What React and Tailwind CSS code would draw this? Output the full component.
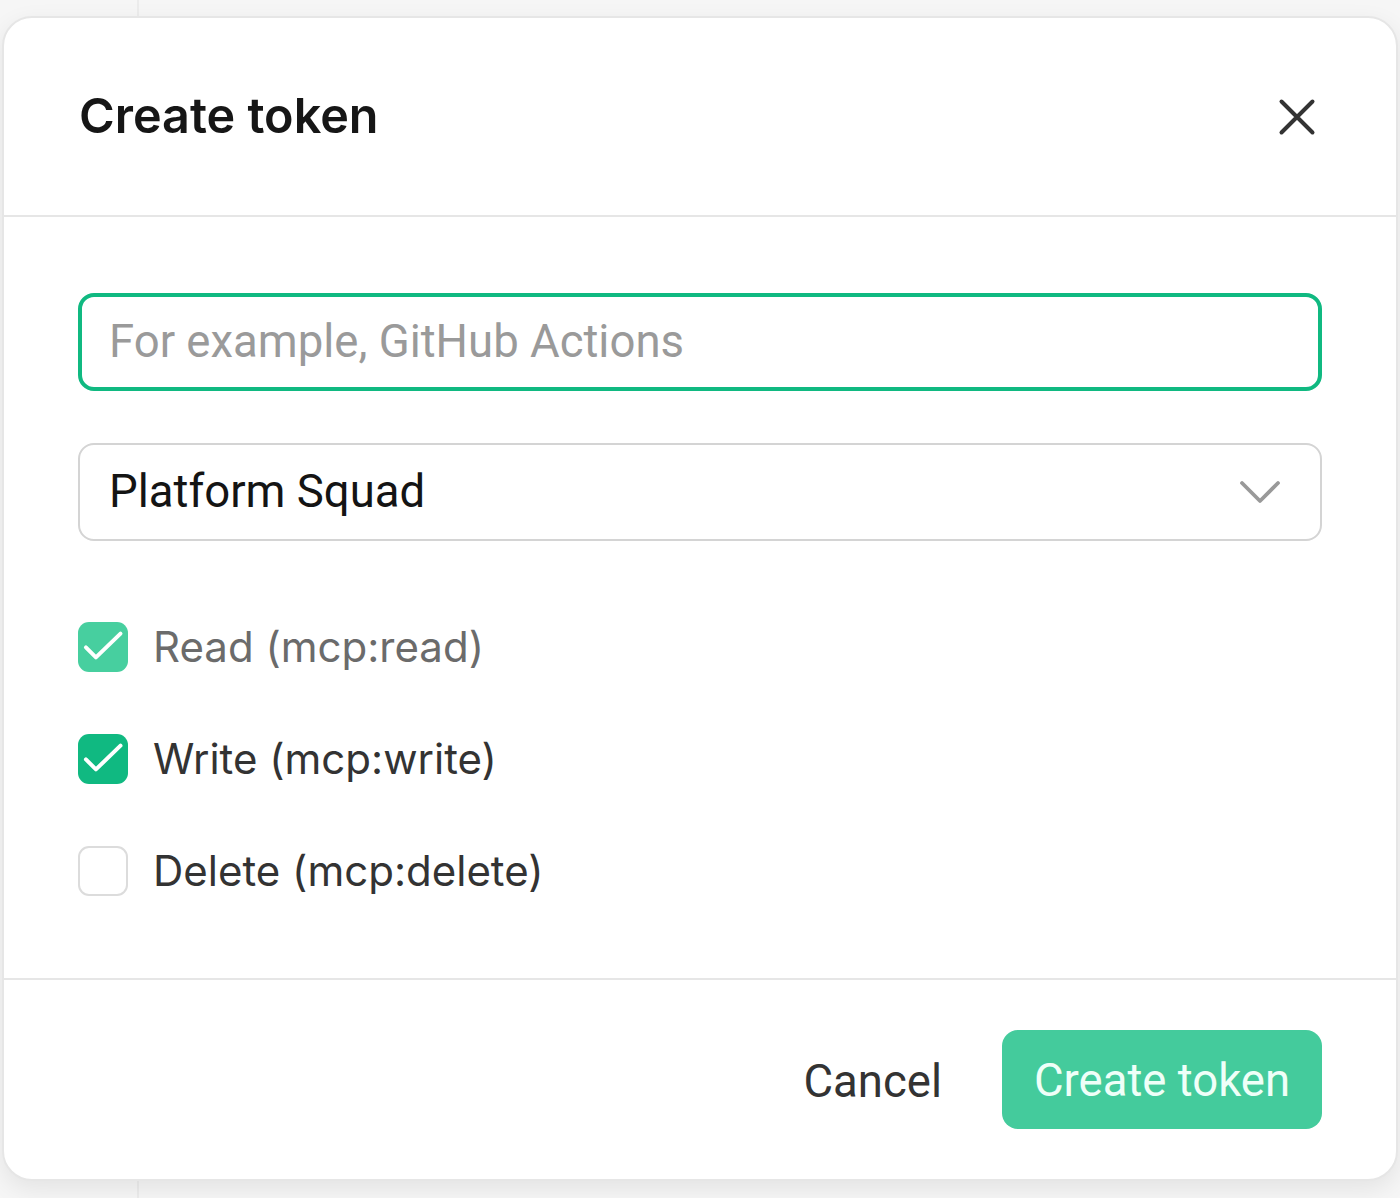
import React from "react";

function Check({ className }) {
  return (
    <svg viewBox="0 0 24 24" className={className} fill="none" stroke="currentColor" strokeWidth="1.9" strokeLinecap="round" strokeLinejoin="round">
      <path d="M3.8 12.2l4.8 4.8L20.4 5.6" />
    </svg>
  );
}

function CheckRow({ state, label }) {
  const box =
    state === "dim"
      ? "bg-[#47cf9f] text-white"
      : state === "on"
      ? "bg-[#10b981] text-white"
      : "border-2 border-[#dcdcdc] bg-white";
  const text = state === "dim" ? "text-[#6b6b6b]" : "text-[#333333]";
  return (
    <div className="flex items-center gap-[25px]">
      <div className={`w-[50px] h-[50px] rounded-[11px] flex items-center justify-center ${box}`}>
        {state !== "off" && <Check className="w-[50px] h-[50px]" />}
      </div>
      <span className={`text-[42px] leading-none ${text}`} style={{ fontFamily: "Inter, 'Liberation Sans', sans-serif" }}>
        {label}
      </span>
    </div>
  );
}

const roboto = { fontFamily: "Roboto, 'Liberation Sans', sans-serif" };

export default function App() {
  return (
    <div className="relative w-[1400px] h-[1198px] bg-[#f6f6f6] flex overflow-hidden">
      <div className="w-[139px] h-full border-r-2 border-[#ececec]" />
      <div className="absolute left-[2px] top-[16px] w-[1396px] h-[1165px] bg-white border-2 border-[#e6e6e6] rounded-[30px] shadow-[0_8px_24px_rgba(0,0,0,0.08)] flex flex-col">
        <div className="h-[199px] flex items-center justify-between pl-[75px] pr-[75px] border-b-2 border-[#e6e6e6]">
          <h1 className="text-[48.5px] font-semibold text-[#161616]" style={{ fontFamily: "Inter, 'Liberation Sans', sans-serif" }}>
            Create token
          </h1>
          <svg viewBox="0 0 24 24" className="w-[48px] h-[48px] text-[#333333]" fill="none" stroke="currentColor" strokeWidth="2" strokeLinecap="round">
            <path d="M4.25 4.25l15.5 15.5M19.75 4.25L4.25 19.75" />
          </svg>
        </div>
        <div className="flex-1 px-[74px] pt-[76px] flex flex-col border-b-2 border-[#e6e6e6]">
          <div className="h-[98px] rounded-[16px] border-4 border-[#10b981] flex items-center px-[27px]">
            <span className="text-[45.5px] text-[#9a9a9a]" style={roboto}>
              For example, GitHub Actions
            </span>
          </div>
          <div className="mt-[52px] h-[98px] rounded-[16px] border-2 border-[#d4d4d4] flex items-center justify-between pl-[29px] pr-[36px]">
            <span className="text-[45.5px] text-[#141414]" style={roboto}>
              Platform Squad
            </span>
            <svg viewBox="0 0 24 24" className="w-[48px] h-[48px] text-[#999999]" fill="none" stroke="currentColor" strokeWidth="1.9" strokeLinecap="round" strokeLinejoin="round">
              <path d="M3 7.5l9 9 9-9" />
            </svg>
          </div>
          <div className="mt-[81px] flex flex-col gap-[62px]">
            <CheckRow state="dim" label="Read (mcp:read)" />
            <CheckRow state="on" label="Write (mcp:write)" />
            <CheckRow state="off" label="Delete (mcp:delete)" />
          </div>
        </div>
        <div className="h-[199px] flex items-center justify-end gap-[60px] px-[74px]">
          <button className="text-[45.5px] text-[#333333] pt-[5px]" style={roboto}>
            Cancel
          </button>
          <button className="h-[99px] w-[320px] rounded-[16px] bg-[#44cb9c] text-[45.5px] text-[#effff8] pt-[4px]" style={roboto}>
            Create token
          </button>
        </div>
      </div>
    </div>
  );
}
